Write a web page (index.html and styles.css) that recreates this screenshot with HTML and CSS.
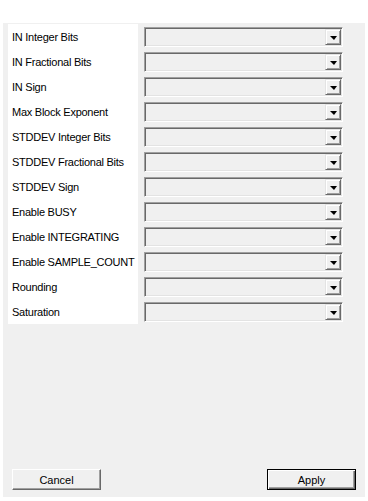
FILE: index.html
```html
<!DOCTYPE html>
<html lang="en">
<head>
    <meta charset="UTF-8">
    <meta name="viewport" content="width=device-width, initial-scale=1.0">
    <title>Settings</title>
    <link rel="stylesheet" href="styles.css">
</head>
<body>
    <div class="dialog">
        <div class="form">
            <div class="labels">
                <div class="label">IN Integer Bits</div>
                <div class="label">IN Fractional Bits</div>
                <div class="label">IN Sign</div>
                <div class="label">Max Block Exponent</div>
                <div class="label">STDDEV Integer Bits</div>
                <div class="label">STDDEV Fractional Bits</div>
                <div class="label">STDDEV Sign</div>
                <div class="label">Enable BUSY</div>
                <div class="label">Enable INTEGRATING</div>
                <div class="label">Enable SAMPLE_COUNT</div>
                <div class="label">Rounding</div>
                <div class="label">Saturation</div>
            </div>
            <div class="fields">
                <div class="row"><div class="combo"><span class="drop"></span></div></div>
                <div class="row"><div class="combo"><span class="drop"></span></div></div>
                <div class="row"><div class="combo"><span class="drop"></span></div></div>
                <div class="row"><div class="combo"><span class="drop"></span></div></div>
                <div class="row"><div class="combo"><span class="drop"></span></div></div>
                <div class="row"><div class="combo"><span class="drop"></span></div></div>
                <div class="row"><div class="combo"><span class="drop"></span></div></div>
                <div class="row"><div class="combo"><span class="drop"></span></div></div>
                <div class="row"><div class="combo"><span class="drop"></span></div></div>
                <div class="row"><div class="combo"><span class="drop"></span></div></div>
                <div class="row"><div class="combo"><span class="drop"></span></div></div>
                <div class="row"><div class="combo"><span class="drop"></span></div></div>
            </div>
        </div>
        <div class="footer">
            <div class="btn">Cancel</div>
            <div class="btn default">Apply</div>
        </div>
    </div>
</body>
</html>
```

FILE: styles.css
```css
body {
    margin: 0;
    background-color: #fff;
    font-family: "Liberation Sans", Arial, sans-serif;
    font-size: 11px;
    color: #000;
}

.dialog {
    margin: 23px 0 0 3px;
    width: 362px;
    height: 474px;
    background-color: #f0f0f0;
    display: flex;
    flex-direction: column;
    box-sizing: border-box;
    padding: 1px 0 0 5px;
}

.form {
    display: flex;
}

.labels {
    width: 130px;
    background-color: #fff;
}

.label {
    height: 25px;
    line-height: 25px;
    padding: 1px 0 0 4px;
    box-sizing: border-box;
    letter-spacing: -0.25px;
    white-space: nowrap;
}

.fields {
    margin-left: 6px;
}

.row {
    height: 25px;
    padding-top: 3px;
    box-sizing: border-box;
}

.combo {
    width: 199px;
    height: 20px;
    box-sizing: border-box;
    background-color: #f0f0f0;
    border-top: 1px solid #a0a0a0;
    border-left: 1px solid #a0a0a0;
    border-right: 1px solid #fff;
    border-bottom: 1px solid #fff;
    box-shadow: inset 1px 1px 0 #696969, inset -1px -1px 0 #e3e3e3;
    display: flex;
    justify-content: flex-end;
    padding: 1px;
}

.drop {
    width: 16px;
    height: 16px;
    box-sizing: border-box;
    background-color: #f0f0f0;
    border-top: 1px solid #e3e3e3;
    border-left: 1px solid #e3e3e3;
    border-right: 1px solid #696969;
    border-bottom: 1px solid #696969;
    box-shadow: inset 1px 1px 0 #fff, inset -1px -1px 0 #a0a0a0;
    display: flex;
    align-items: center;
    justify-content: center;
}

.drop::after {
    content: "";
    border-left: 4px solid transparent;
    border-right: 3px solid transparent;
    border-top: 4px solid #000;
    margin-top: 1px;
}

.footer {
    margin-top: auto;
    display: flex;
    justify-content: space-between;
    padding: 0 9px 7px 4px;
}

.btn {
    width: 89px;
    height: 21px;
    box-sizing: border-box;
    text-align: center;
    line-height: 20px;
    background-color: #f0f0f0;
    border-top: 1px solid #fff;
    border-left: 1px solid #fff;
    border-right: 1px solid #696969;
    border-bottom: 1px solid #696969;
    box-shadow: inset -1px -1px 0 #a0a0a0;
}

.btn.default {
    border: 1px solid #000;
    box-shadow: inset 1px 1px 0 #fff, inset -1px -1px 0 #696969, inset -2px -2px 0 #a0a0a0;
}
```
